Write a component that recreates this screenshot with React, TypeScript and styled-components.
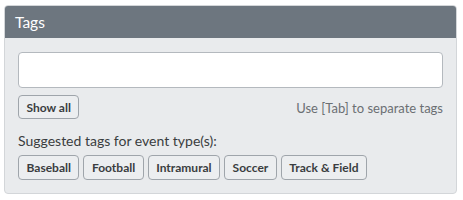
import React from 'react';
import styled, { createGlobalStyle } from 'styled-components';

const GlobalStyle = createGlobalStyle`
  body {
    margin: 0;
    background: #ffffff;
    font-family: Lato, "Noto Sans", sans-serif;
  }
`;

const Page = styled.div`
  padding: 5px 6px 0 4px;
`;

const Panel = styled.section`
  border: 1px solid #d3d6d9;
  border-radius: 4px;
  background: #e9ebed;
  overflow: hidden;
`;

const Header = styled.header`
  background: #6d767f;
  color: #ffffff;
  font-size: 15.5px;
  height: 32px;
  display: flex;
  align-items: center;
  padding: 0 10px;
`;

const Body = styled.div`
  padding: 14px 13px 13px 13px;
`;

const TagInput = styled.input`
  display: block;
  box-sizing: border-box;
  width: 100%;
  height: 36px;
  border: 1px solid #b4b9be;
  border-radius: 4px;
  background: #ffffff;
  outline: none;
`;

const Row = styled.div`
  display: flex;
  justify-content: space-between;
  align-items: flex-start;
  margin-top: 7px;
`;

const Hint = styled.span`
  font-size: 13px;
  color: #6b6f73;
  margin-top: 5px;
`;

const Label = styled.div`
  font-size: 14px;
  color: #3a3d40;
  margin-top: 13px;
`;

const TagList = styled.div`
  display: flex;
  gap: 4px;
  margin-top: 6px;
`;

const Button = styled.button`
  font-family: Lato, "Noto Sans", sans-serif;
  font-weight: 700;
  font-size: 12px;
  color: #3a3d40;
  background: #eceef0;
  border: 1px solid #9fa5ab;
  border-radius: 4px;
  height: ${(p: { $tall?: boolean }) => (p.$tall ? 25 : 24)}px;
  padding: 0 7.5px;
  cursor: pointer;
`;

const suggested = ['Baseball', 'Football', 'Intramural', 'Soccer', 'Track & Field'];

export default function App() {
  return (
    <>
      <GlobalStyle />
      <Page>
        <Panel>
          <Header>Tags</Header>
          <Body>
            <TagInput />
            <Row>
              <Button>Show all</Button>
              <Hint>Use [Tab] to separate tags</Hint>
            </Row>
            <Label>Suggested tags for event type(s):</Label>
            <TagList>
              {suggested.map((t) => (
                <Button key={t} $tall>
                  {t}
                </Button>
              ))}
            </TagList>
          </Body>
        </Panel>
      </Page>
    </>
  );
}
